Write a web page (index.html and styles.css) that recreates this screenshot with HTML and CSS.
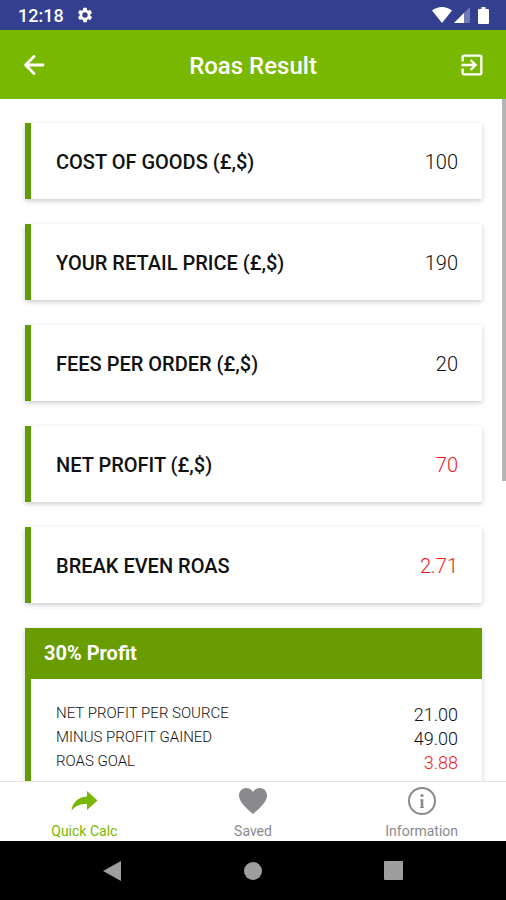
FILE: index.html
```html
<!DOCTYPE html>
<html lang="en">
<head>
<meta charset="utf-8">
<meta name="viewport" content="width=device-width, initial-scale=1">
<title>Roas Result</title>
<link rel="stylesheet" href="styles.css">
</head>
<body>
<div class="status-bar">
  <span class="clock">12:18</span>
  <svg class="gear" viewBox="0 0 24 24" aria-hidden="true"><path d="M19.14 12.94c.04-.3.06-.61.06-.94 0-.32-.02-.64-.07-.94l2.03-1.58a.49.49 0 0 0 .12-.61l-1.92-3.32a.49.49 0 0 0-.59-.22l-2.39.96a7 7 0 0 0-1.62-.94L14.4 2.81a.48.48 0 0 0-.48-.41h-3.84a.47.47 0 0 0-.47.41l-.36 2.54a7.300 7.300 0 0 0-1.620.940l-2.390-.960a.48.48 0 0 0-.590.220L2.740 8.870a.47.47 0 0 0 .120.610l2.030 1.580a6 6 0 0 0 0 1.880l-2.030 1.580a.49.49 0 0 0-.120.610l1.920 3.320c.120.220.370.290.590.220l2.390-.960c.500.380 1.030.700 1.620.940l.360 2.540c.050.240.240.410.480.410h3.840c.240 0 .440-.170.470-.410l.360-2.540a7 7 0 0 0 1.620-.940l2.390.960c.220.080.470 0 .590-.220l1.920-3.320a.47.47 0 0 0-.120-.610zM12 15.600a3.600 3.600 0 1 1 0-7.200 3.600 3.600 0 0 1 0 7.200z"/></svg>
  <div class="indicators">
    <svg class="wifi" viewBox="0 0 20 16" aria-hidden="true"><path d="M10 16 0 3.500Q4.500 0 10 0t10 3.500z"/></svg>
    <svg class="signal" viewBox="0 0 16 16" aria-hidden="true"><path d="M0 16 16 0v16z" opacity=".3"/><path d="M0 16 10 6v10z"/></svg>
    <svg class="battery" viewBox="0 0 12 17" aria-hidden="true"><path d="M3.500 0h4v2H10q1 0 1 1v13q0 1-1 1H1q-1 0-1-1V3q0-1 1-1h2.500z"/></svg>
  </div>
</div>

<header class="app-bar">
  <button class="icon-button" type="button" aria-label="Back">
    <svg viewBox="0 0 24 24" aria-hidden="true"><path class="stroke" d="M19.700 12H5M12 4.800 4.800 12l7.200 7.200"/></svg>
  </button>
  <h1>Roas Result</h1>
  <button class="icon-button" type="button" aria-label="Exit">
    <svg viewBox="0 0 24 24" aria-hidden="true"><path d="M10.090 15.590 11.500 17l5-5-5-5-1.410 1.410L12.670 11H3v2h9.670l-2.580 2.590zM19 3H5a2 2 0 0 0-2 2v4h2V5h14v14H5v-4H3v4a2 2 0 0 0 2 2h14a2 2 0 0 0 2-2V5a2 2 0 0 0-2-2z"/></svg>
  </button>
</header>

<main class="content">
  <div class="cards">
    <section class="card row"><h2>COST OF GOODS (£,$)</h2><p class="value">100</p></section>
    <section class="card row"><h2>YOUR RETAIL PRICE (£,$)</h2><p class="value">190</p></section>
    <section class="card row"><h2>FEES PER ORDER (£,$)</h2><p class="value">20</p></section>
    <section class="card row"><h2>NET PROFIT (£,$)</h2><p class="value result">70</p></section>
    <section class="card row"><h2>BREAK EVEN ROAS</h2><p class="value result">2.71</p></section>
    <section class="card">
      <h2 class="card-title">30% Profit</h2>
      <dl class="details">
        <div><dt>NET PROFIT PER SOURCE</dt><dd>21.00</dd></div>
        <div><dt>MINUS PROFIT GAINED</dt><dd>49.00</dd></div>
        <div><dt>ROAS GOAL</dt><dd class="result">3.88</dd></div>
      </dl>
    </section>
  </div>
  <div class="scroll-thumb"></div>
</main>

<nav class="tabs" aria-label="Sections">
  <a class="tab active" href="#quick-calc">
    <svg viewBox="0 0 28 28" aria-hidden="true"><path d="M17 4v5.500C7 10 2 17 1.500 24c4-5.500 8.500-7 15.500-7v6l10.500-9.500z"/></svg>
    <span>Quick Calc</span>
  </a>
  <a class="tab" href="#saved">
    <svg viewBox="0 0 28 28" aria-hidden="true"><path d="M14 27C9 22.500 0 15.500 0 8.500 0 4 3.300 1 7.300 1 10.500 1 12.700 2.800 14 5c1.300-2.200 3.500-4 6.700-4C24.700 1 28 4 28 8.500 28 15.500 19 22.500 14 27z"/></svg>
    <span>Saved</span>
  </a>
  <a class="tab" href="#information">
    <svg viewBox="0 0 28 28" aria-hidden="true"><circle class="ring" cx="14" cy="14" r="13"/><circle cx="14" cy="8.500" r="1.600"/><path d="M12 12.200h3.300v7.800h.700v1h-4v-1h.700v-6.800H12z"/></svg>
    <span>Information</span>
  </a>
</nav>

<div class="system-nav">
  <button type="button" aria-label="System back"><svg viewBox="0 0 20 20" aria-hidden="true"><path d="M19 0v20L1 10z"/></svg></button>
  <button type="button" aria-label="Home"><svg viewBox="0 0 20 20" aria-hidden="true"><circle cx="10" cy="10" r="9"/></svg></button>
  <button type="button" aria-label="Overview"><svg viewBox="0 0 20 20" aria-hidden="true"><rect width="19" height="19" rx="1"/></svg></button>
</div>
</body>
</html>
```
FILE: styles.css
```css
* {
  box-sizing: border-box;
}

body {
  margin: 0;
  height: 100vh;
  display: flex;
  flex-direction: column;
  overflow: hidden;
  background: #fff;
  color: #111;
  font-family: Roboto, "Liberation Sans", sans-serif;
}

h1, h2, p, dl, dd {
  margin: 0;
}

button {
  padding: 0;
  border: 0;
  background: none;
  color: inherit;
}

svg {
  display: block;
  fill: currentColor;
}

.status-bar {
  flex: none;
  height: 30px;
  padding: 0 16px 0 18px;
  display: flex;
  align-items: center;
  gap: 12px;
  background: #334090;
  color: #fff;
}

.clock {
  font-size: 18px;
  font-weight: 500;
}

.gear {
  width: 18px;
  height: 18px;
}

.indicators {
  margin-left: auto;
  display: flex;
  align-items: center;
  gap: 2px;
}

.wifi {
  width: 20px;
  height: 16px;
}

.signal {
  width: 16px;
  height: 16px;
}

.battery {
  width: 12px;
  height: 17px;
  margin-left: 6px;
}

.app-bar {
  flex: none;
  height: 69px;
  padding: 0 20px;
  display: flex;
  align-items: center;
  justify-content: space-between;
  background: #78b800;
  color: #fff;
}

.app-bar h1 {
  padding-top: 3px;
  font-size: 24px;
  font-weight: 500;
}

.icon-button svg {
  width: 28px;
  height: 28px;
}

.stroke {
  fill: none;
  stroke: currentColor;
  stroke-width: 2.400;
  stroke-linecap: round;
  stroke-linejoin: round;
}

.content {
  flex: 1;
  min-height: 0;
  position: relative;
  overflow: hidden;
}

.cards {
  padding: 24px 24px 24px 25px;
  display: flex;
  flex-direction: column;
  gap: 25px;
}

.card {
  border-left: 6px solid #5f9c08;
  background: #fff;
  box-shadow: 0 2px 5px rgba(0, 0, 0, 0.2);
}

.row {
  height: 76px;
  padding: 2px 24px 0 25px;
  display: flex;
  align-items: center;
  justify-content: space-between;
}

.row h2 {
  font-size: 20px;
  font-weight: 500;
}

.value {
  font-size: 20px;
  font-weight: 300;
}

.result {
  color: #f01822;
}

.card-title {
  margin-left: -6px;
  padding: 0 19px;
  background: #689c00;
  color: #fff;
  font-size: 20px;
  font-weight: 700;
  line-height: 51px;
}

.details {
  padding: 24px 24px 24px 25px;
}

.details div {
  display: flex;
  justify-content: space-between;
}

.details dt {
  font-size: 15px;
  font-weight: 300;
  line-height: 20px;
}

.details dd {
  font-size: 18px;
  font-weight: 300;
  line-height: 24px;
}

.scroll-thumb {
  position: absolute;
  top: 0;
  right: 0;
  width: 4px;
  height: 56%;
  background: #b4b4b4;
}

.tabs {
  flex: none;
  height: 60px;
  display: grid;
  grid-template-columns: repeat(3, 1fr);
  border-top: 1px solid #e4e4e4;
  background: #fff;
}

.tab {
  padding-top: 5px;
  display: flex;
  flex-direction: column;
  align-items: center;
  gap: 8px;
  color: #8a8a8e;
  font-size: 14px;
  line-height: 16px;
  text-decoration: none;
}

.tab svg {
  width: 28px;
  height: 28px;
}

.ring {
  fill: none;
  stroke: currentColor;
  stroke-width: 2;
}

.active {
  color: #78b800;
}

.system-nav {
  flex: none;
  height: 59px;
  padding: 0 42px;
  display: grid;
  grid-template-columns: repeat(3, 1fr);
  justify-items: center;
  align-items: center;
  background: #000;
  color: #9e9e9e;
}

.system-nav svg {
  width: 20px;
  height: 20px;
}
```
